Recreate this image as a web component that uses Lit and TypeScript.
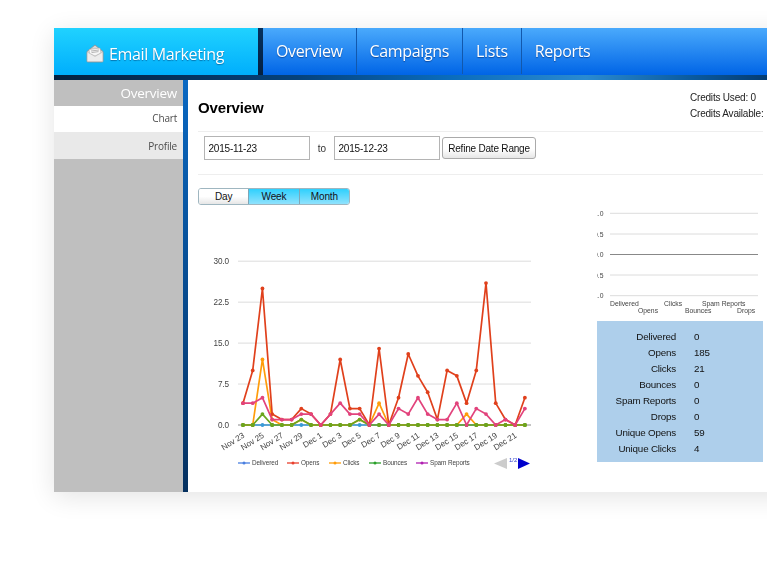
import { LitElement, html, css, svg } from "lit";
import { customElement } from "lit/decorators.js";

const opens = [4,10,25,2,1,1,3,2,0,2,12,3,3,0,14,0,5,13,9,6,1,10,9,4,10,26,4,1,0,5];
const spam = [4,4,5,1,1,1,2,2,0,2,4,2,2,0,2,0,3,2,5,2,1,1,4,0,3,2,0,1,0,3];
const clicks = [0,0,12,1,0,0,1,0,0,0,0,0,1,0,4,0,0,0,0,0,0,0,0,2,0,0,0,0,0,0];
const bounces = [0,0,2,0,0,0,1,0,0,0,0,0,1,0,0,0,0,0,0,0,0,0,0,0,0,0,0,0,0,0];
const delivered = new Array(30).fill(0);

const X = (i: number) => 243 + i * 9.72;
const Y = (v: number) => 425 - v * 5.46;

const dateLabels = ["Nov 23","Nov 25","Nov 27","Nov 29","Dec 1","Dec 3","Dec 5","Dec 7","Dec 9","Dec 11","Dec 13","Dec 15","Dec 17","Dec 19","Dec 21"];

const series: [number[], string][] = [
  [delivered, "#3a9bd8"],
  [clicks, "#ff9c0a"],
  [bounces, "#6ba51e"],
  [opens, "#e0401c"],
  [spam, "#e2437c"],
];

const legend: [string, string, number, number][] = [
  ["Delivered", "#4a7fe0", 238, 252],
  ["Opens", "#e8402e", 287, 301],
  ["Clicks", "#ff9c0a", 329, 343],
  ["Bounces", "#2aa02a", 369, 383],
  ["Spam Reports", "#b020b0", 416, 430],
];

const stats: [string, string][] = [
  ["Delivered", "0"],
  ["Opens", "185"],
  ["Clicks", "21"],
  ["Bounces", "0"],
  ["Spam Reports", "0"],
  ["Drops", "0"],
  ["Unique Opens", "59"],
  ["Unique Clicks", "4"],
];

@customElement("app-root")
export class AppRoot extends LitElement {
  static styles = css`
    :host { display: block; width: 767px; height: 562px; overflow: hidden; background: #fff; font-family: "Liberation Sans", Arial, sans-serif; color: #333; }
    .stage { padding: 28px 0 0 54px; height: 562px; box-sizing: border-box; overflow: hidden; }
    .window { width: 760px; height: 464px; display: flex; flex-direction: column; box-shadow: 0 5px 24px rgba(0,0,0,.11); filter: blur(.4px); background: #fff; }
    header { height: 52px; flex: none; box-sizing: border-box; padding-bottom: 5px; display: flex; background: linear-gradient(90deg, #04203f 0, #05427c 32%, #0a6cbc 52%, #2a8ad0 70%, #0a5a9e 84%, #04386c 95%); }
    .brand { width: 204px; flex: none; display: flex; align-items: center; justify-content: flex-start; gap: 5px; padding: 4px 0 0 32px; box-sizing: border-box; background: linear-gradient(#20d2ff, #00aefc); font: 16px "Open Sans", sans-serif; letter-spacing: -.35px; color: #fff; text-shadow: 0 1px 1px rgba(0,50,100,.5); }
    .sep { width: 5px; flex: none; background: linear-gradient(#05305e, #041f40); }
    nav { flex: 1; display: flex; background: linear-gradient(#4aaafc, #0064e6); font: 16px "Open Sans", sans-serif; letter-spacing: -.35px; color: #fff; text-shadow: 0 1px 1px rgba(0,30,90,.5); }
    nav a { padding: 0 13px; display: flex; align-items: center; border-right: 1px solid #1258ac; height: 46px; }
    nav a.last { border-right: 0; }
    .body { flex: 1; display: flex; min-height: 0; }
    aside { width: 129px; flex: none; background: #bfbfbf; font-family: "Open Sans", sans-serif; text-align: right; }
    aside div { box-sizing: border-box; padding-right: 6px; color: #4d4d4d; font-size: 10px; letter-spacing: -.2px; display: flex; align-items: center; justify-content: flex-end; }
    aside .head { height: 26px; color: #fff; font-size: 13.5px; letter-spacing: -.25px; }
    aside .chart { height: 26px; background: #fff; padding-bottom: 2px; }
    aside .profile { height: 27px; background: #e9e9e9; }
    .rail { width: 5px; flex: none; background: linear-gradient(#0a68c2, #05305f); }
    main { width: 575px; flex: none; box-sizing: border-box; padding-left: 10px; overflow: hidden; }
    .title { height: 52px; box-sizing: border-box; display: flex; justify-content: space-between; border-bottom: 1px solid #eee; width: 565px; }
    h1 { margin: 19px 0 0; font-size: 15px; letter-spacing: -.15px; line-height: 18px; font-weight: bold; color: #000; }
    .credits { width: 73px; flex: none; white-space: nowrap; font-size: 10px; letter-spacing: -.2px; line-height: 16px; padding-top: 10px; color: #222; }
    .tools { height: 43px; box-sizing: border-box; width: 565px; border-bottom: 1px solid #eee; display: flex; align-items: center; padding: 0 0 10px 6px; }
    .date { width: 106px; height: 24px; box-sizing: border-box; border: 1px solid #b4b4b4; display: flex; align-items: center; padding-left: 3.5px; color: #111; font-size: 10px; letter-spacing: -.2px; }
    .to { width: 24px; text-align: center; color: #333; font-size: 10px; }
    button { margin-left: 2px; width: 94px; height: 22px; padding: 0; border: 1px solid #aaa; border-radius: 3px; background: linear-gradient(#fff 55%, #e6e6e6); font: 10px "Liberation Sans", sans-serif; letter-spacing: -.2px; color: #111; }
    .toggle { margin-top: 13px; width: 152px; height: 17px; box-sizing: border-box; border: 1px solid #9fb6c0; border-radius: 3px; display: flex; font-size: 10px; letter-spacing: -.15px; overflow: hidden; color: #112; }
    .toggle span { flex: 1; display: flex; align-items: center; justify-content: center; background: linear-gradient(#2fd0fd, #90e2fd); }
    .toggle span + span { border-left: 1px solid #7fa6b6; }
    .toggle .off { background: linear-gradient(#fff 50%, #e6e6e6); color: #111; }
    .charts { display: flex; width: 565px; }
    .left { width: 399px; flex: none; }
    .left svg { display: block; width: 345px; height: 270px; }
    .right { width: 166px; flex: none; }
    .right svg { display: block; width: 166px; height: 116px; }
    text { font-family: "Liberation Sans", Arial, sans-serif; }
    .ax { font-size: 8.2px; letter-spacing: -.1px; fill: #444; }
    .dt { font-size: 8.2px; letter-spacing: -.1px; fill: #444; }
    .lg { font-size: 6.4px; letter-spacing: -.1px; fill: #444; }
    .pg { font-size: 6px; fill: #3344cc; }
    .sm { font-size: 6.8px; fill: #444; }
    .stats { background: #aecfeb; height: 141px; box-sizing: border-box; padding-top: 7px; margin: 0; font-size: 9.8px; letter-spacing: -.18px; }
    .row { display: flex; height: 16px; align-items: center; color: #111; }
    .row b { font-weight: normal; width: 79px; text-align: right; margin-right: 18px; white-space: nowrap; }
  `;

  private chart() {
    const grid = [30, 22.5, 15, 7.5];
    return html`<svg viewBox="198 205 345 270" aria-label="Line chart">
      ${grid.map((v) => svg`<line x1="238" x2="531" y1=${Y(v)} y2=${Y(v)} stroke="#dcdcdc" stroke-width="1"></line>`)}
      <line x1="238" x2="531" y1="425" y2="425" stroke="#888" stroke-width="1"></line>
      ${[30, 22.5, 15, 7.5, 0].map((v) => svg`<text class="ax" x="229" y=${Y(v) + 2.9} text-anchor="end">${v.toFixed(1)}</text>`)}
      ${series.map(([d, c]) => svg`
        <polyline fill="none" stroke=${c} stroke-width="1.7" stroke-linejoin="round" points=${d.map((v, i) => `${X(i)},${Y(v)}`).join(" ")}></polyline>
        ${d.map((v, i) => svg`<circle cx=${X(i)} cy=${Y(v)} r="1.9" fill=${c}></circle>`)}`)}
      ${bounces.map((v, i) => v === 0 && opens[i] !== 0 && spam[i] !== 0 ? svg`<circle cx=${X(i)} cy=${Y(0)} r="1.9" fill="#6ba51e"></circle>` : "")}
      ${dateLabels.map((t, i) => svg`<text class="dt" text-anchor="end" transform="translate(${X(i * 2) + 2} 437) rotate(-32)">${t}</text>`)}
      ${legend.map(([t, c, lx, tx]) => svg`
        <line x1=${lx} x2=${lx + 12} y1="463" y2="463" stroke=${c} stroke-width="1.3"></line>
        <circle cx=${lx + 6} cy="463" r="1.5" fill=${c}></circle>
        <text class="lg" x=${tx} y="465.2">${t}</text>`)}
      <polygon points="494,463.5 507,458 507,469" fill="#cccccc"></polygon>
      <text class="pg" x="509" y="462">1/2</text>
      <polygon points="518,458 530,463.5 518,469" fill="#0000cc"></polygon>
    </svg>`;
  }

  private side() {
    const ys: [string, number, boolean][] = [["1.0", 213.3, false], ["0.5", 234, false], ["0.0", 254.5, true], ["-0.5", 275, false], ["-1.0", 295.7, false]];
    const labs: [string, number, number][] = [["Delivered", 610, 305.5], ["Opens", 638, 313], ["Clicks", 664, 305.5], ["Bounces", 685, 313], ["Spam Reports", 702, 305.5], ["Drops", 737, 313]];
    return html`<svg viewBox="597 205 166 116" aria-label="Totals chart">
      ${ys.map(([t, y, d]) => svg`
        <line x1="610" x2="758" y1=${y} y2=${y} stroke=${d ? "#888" : "#dcdcdc"} stroke-width="1"></line>
        <text class="sm" x="603.5" y=${y + 2.5} text-anchor="end">${t}</text>`)}
      ${labs.map(([t, x, y]) => svg`<text class="sm" x=${x} y=${y}>${t}</text>`)}
    </svg>`;
  }

  render() {
    return html`<div class="stage"><div class="window">
      <header>
        <div class="brand">
          <svg width="18" height="19" viewBox="0 0 18 19" aria-hidden="true">
            <path d="M1 7.5 9 1l8 6.5V17a1 1 0 0 1-1 1H2a1 1 0 0 1-1-1Z" fill="#d8d8d8" stroke="#8f8f8f" stroke-width=".8"></path>
            <path d="M3.5 9.5 3 5.5l11-1.5 1 5-6 3Z" fill="#f6f6f6" stroke="#a0a0a0" stroke-width=".5"></path>
            <path d="M5 7l8-1M5.5 8.6l7-1" stroke="#999" stroke-width=".7"></path>
            <path d="M1.2 8 9 12.5 16.8 8V17.6H1.2Z" fill="#ececec" stroke="#b5b5b5" stroke-width=".5"></path>
          </svg>
          <span>Email Marketing</span>
        </div>
        <div class="sep"></div>
        <nav>
          <a>Overview</a><a>Campaigns</a><a>Lists</a><a class="last">Reports</a>
        </nav>
      </header>
      <div class="body">
        <aside>
          <div class="head">Overview</div>
          <div class="chart">Chart</div>
          <div class="profile">Profile</div>
        </aside>
        <div class="rail"></div>
        <main>
          <div class="title">
            <h1>Overview</h1>
            <div class="credits">Credits Used: 0<br />Credits Available:</div>
          </div>
          <div class="tools">
            <div class="date">2015-11-23</div>
            <div class="to">to</div>
            <div class="date">2015-12-23</div>
            <button>Refine Date Range</button>
          </div>
          <div class="toggle"><span class="off">Day</span><span>Week</span><span>Month</span></div>
          <div class="charts">
            <div class="left">${this.chart()}</div>
            <div class="right">
              ${this.side()}
              <div class="stats">
                ${stats.map(([k, v]) => html`<div class="row"><b>${k}</b><span>${v}</span></div>`)}
              </div>
            </div>
          </div>
        </main>
      </div>
    </div></div>`;
  }
}
